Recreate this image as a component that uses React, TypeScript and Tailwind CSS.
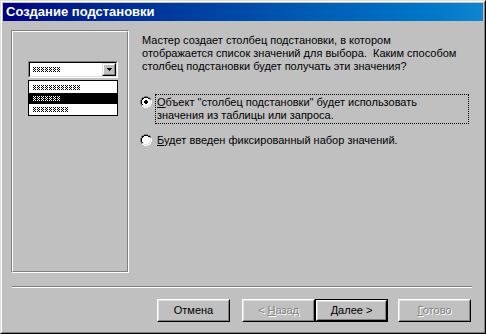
import React from "react";

function Hatch({ n, white }: { n: number; white?: boolean }) {
  const c = white ? "#ffffff" : "#000000";
  const rects: React.ReactNode[] = [];
  for (let i = 0; i < n; i++) {
    const x = i * 4;
    const pts = [
      [0, 0], [2, 0], [1, 1], [0, 2], [2, 2], [1, 3], [0, 4], [2, 4],
    ];
    pts.forEach(([px, py], k) =>
      rects.push(<rect key={`${i}-${k}`} x={x + px} y={py} width={1} height={1} fill={c} />)
    );
  }
  return (
    <svg width={n * 4} height={5} viewBox={`0 0 ${n * 4} 5`} shapeRendering="crispEdges" className="block">
      {rects}
    </svg>
  );
}

function Radio({ checked }: { checked?: boolean }) {
  return (
    <svg width="12" height="12" viewBox="0 0 12 12" shapeRendering="crispEdges" className="block shrink-0">
      <rect x="4" y="0" width="4" height="1" fill="#808080" />
      <rect x="2" y="1" width="2" height="1" fill="#808080" />
      <rect x="8" y="1" width="2" height="1" fill="#808080" />
      <rect x="1" y="2" width="1" height="2" fill="#808080" />
      <rect x="0" y="4" width="1" height="4" fill="#808080" />
      <rect x="1" y="8" width="1" height="2" fill="#808080" />
      <rect x="10" y="2" width="1" height="2" fill="#808080" />
      <rect x="4" y="1" width="4" height="1" fill="#000" />
      <rect x="2" y="2" width="2" height="1" fill="#000" />
      <rect x="8" y="2" width="2" height="1" fill="#000" />
      <rect x="2" y="3" width="1" height="1" fill="#000" />
      <rect x="1" y="4" width="1" height="4" fill="#000" />
      <rect x="2" y="8" width="1" height="1" fill="#000" />
      <rect x="4" y="2" width="4" height="8" fill="#fff" />
      <rect x="3" y="3" width="6" height="6" fill="#fff" />
      <rect x="2" y="4" width="8" height="4" fill="#fff" />
      <rect x="10" y="4" width="1" height="4" fill="#dfdfdf" />
      <rect x="9" y="8" width="1" height="1" fill="#dfdfdf" />
      <rect x="8" y="9" width="2" height="1" fill="#dfdfdf" />
      <rect x="4" y="10" width="4" height="1" fill="#dfdfdf" />
      <rect x="2" y="9" width="2" height="1" fill="#dfdfdf" />
      <rect x="9" y="3" width="1" height="1" fill="#dfdfdf" />
      <rect x="11" y="4" width="1" height="4" fill="#fff" />
      <rect x="10" y="8" width="1" height="2" fill="#fff" />
      <rect x="8" y="10" width="2" height="1" fill="#fff" />
      <rect x="4" y="11" width="4" height="1" fill="#fff" />
      <rect x="2" y="10" width="2" height="1" fill="#fff" />
      {checked && (
        <>
          <rect x="5" y="4" width="2" height="4" fill="#000" />
          <rect x="4" y="5" width="4" height="2" fill="#000" />
        </>
      )}
    </svg>
  );
}

function Btn({
  children,
  def,
  disabled,
}: {
  children: React.ReactNode;
  def?: boolean;
  disabled?: boolean;
}) {
  const face = (
    <div className="w-full h-full border border-t-white border-l-white border-r-black border-b-black">
      <div
        className={
          "w-full h-full border border-t-[#dfdfdf] border-l-[#dfdfdf] border-r-[#808080] border-b-[#808080] flex items-center justify-center " +
          (disabled ? "text-[#808080] [text-shadow:1px_1px_0_#ffffff]" : "text-black")
        }
      >
        <span className="whitespace-pre">{children}</span>
      </div>
    </div>
  );
  return (
    <div className={"w-[73px] h-[23px] shrink-0 " + (def ? "border border-black" : "")}>
      {face}
    </div>
  );
}

export default function App() {
  return (
    <div
      className="w-[486px] h-[334px] bg-[#c0c0c0] text-[11px] leading-[13px] text-black"
      style={{ fontFamily: '"Liberation Sans", Arial, sans-serif' }}
    >
      <div className="w-full h-full border border-t-[#dfdfdf] border-l-[#dfdfdf] border-r-black border-b-black">
        <div className="w-full h-full border border-t-white border-l-white border-r-[#808080] border-b-[#808080] p-px flex flex-col">
          {/* title bar */}
          <div className="h-[18px] shrink-0 bg-gradient-to-r from-[#000080] to-[#1084d0] flex items-center pl-[3px]">
            <span className="text-white font-bold text-[13px] leading-[18px] whitespace-nowrap">
              Создание подстановки
            </span>
          </div>

          {/* body */}
          <div className="flex-1 flex flex-col">
            <div className="flex items-start">
              {/* left illustration frame */}
              <div className="ml-[8px] mt-[9px] w-[118px] h-[243px] shrink-0 border border-t-[#808080] border-l-[#808080] border-r-white border-b-white">
                <div className="w-full h-full border border-t-white border-l-white border-r-[#808080] border-b-[#808080] pt-[29px] pl-[15px]">
                  {/* combo */}
                  <div className="w-[90px] h-[17px] border border-t-[#808080] border-l-[#808080] border-r-white border-b-white">
                    <div className="w-full h-full border border-t-black border-l-black border-r-[#dfdfdf] border-b-[#dfdfdf] bg-white flex items-center">
                      <div className="flex-1 pl-[3px]">
                        <Hatch n={7} />
                      </div>
                      <div className="w-[14px] h-full border border-t-[#dfdfdf] border-l-[#dfdfdf] border-r-black border-b-black bg-[#c0c0c0]">
                        <div className="w-full h-full border border-t-white border-l-white border-r-[#808080] border-b-[#808080] flex items-center justify-center">
                          <svg width="5" height="3" viewBox="0 0 5 3" shapeRendering="crispEdges" className="block">
                            <rect x="0" y="0" width="5" height="1" fill="#000" />
                            <rect x="1" y="1" width="3" height="1" fill="#000" />
                            <rect x="2" y="2" width="1" height="1" fill="#000" />
                          </svg>
                        </div>
                      </div>
                    </div>
                  </div>
                  {/* list */}
                  <div className="mt-[2px] w-[90px] h-[36px] border border-black bg-white py-px">
                    <div className="h-[11px] flex items-center pl-[4px]">
                      <Hatch n={12} />
                    </div>
                    <div className="h-[11px] flex items-center pl-[4px] bg-black">
                      <Hatch n={7} white />
                    </div>
                    <div className="h-[11px] flex items-center pl-[4px]">
                      <Hatch n={9} />
                    </div>
                  </div>
                </div>
              </div>

              {/* right column */}
              <div className="ml-[11px] mt-[13px] flex flex-col">
                <div className="pl-[2px] whitespace-pre">
                  <div>Мастер создает столбец подстановки, в котором</div>
                  <div>{"отображается список значений для выбора.  Каким способом"}</div>
                  <div>столбец подстановки будет получать эти значения?</div>
                </div>

                <div className="mt-[21px] flex items-start">
                  <div className="mt-[2px]">
                    <Radio checked />
                  </div>
                  <div className="ml-[3px] w-[314px] border border-dotted border-black px-px py-px whitespace-pre">
                    <div>
                      <span className="underline">О</span>
                      <span>{"бъект \"столбец подстановки\" будет использовать"}</span>
                    </div>
                    <div>значения из таблицы или запроса.</div>
                  </div>
                </div>

                <div className="mt-[8px] flex items-start">
                  <div className="mt-[2px]">
                    <Radio />
                  </div>
                  <div className="ml-[3px] border border-transparent px-px py-px whitespace-pre">
                    <span className="underline">Б</span>
                    <span>{"удет введен фиксированный набор значений."}</span>
                  </div>
                </div>
              </div>
            </div>

            {/* separator */}
            <div className="mt-[13px] ml-[9px] w-[460px] h-[2px] border-t border-t-[#808080] border-b border-b-white" />

            {/* buttons */}
            <div className="mt-[11px] ml-[154px] flex">
              <Btn>Отмена</Btn>
              <div className="ml-[12px] flex">
                <Btn disabled>
                  {"< "}
                  <span className="underline">Н</span>
                  {"азад"}
                </Btn>
                <Btn def>
                  <span className="underline">Д</span>
                  {"алее >"}
                </Btn>
              </div>
              <div className="ml-[10px]">
                <Btn disabled>
                  <span className="underline">Г</span>
                  {"отово"}
                </Btn>
              </div>
            </div>
          </div>
        </div>
      </div>
    </div>
  );
}
